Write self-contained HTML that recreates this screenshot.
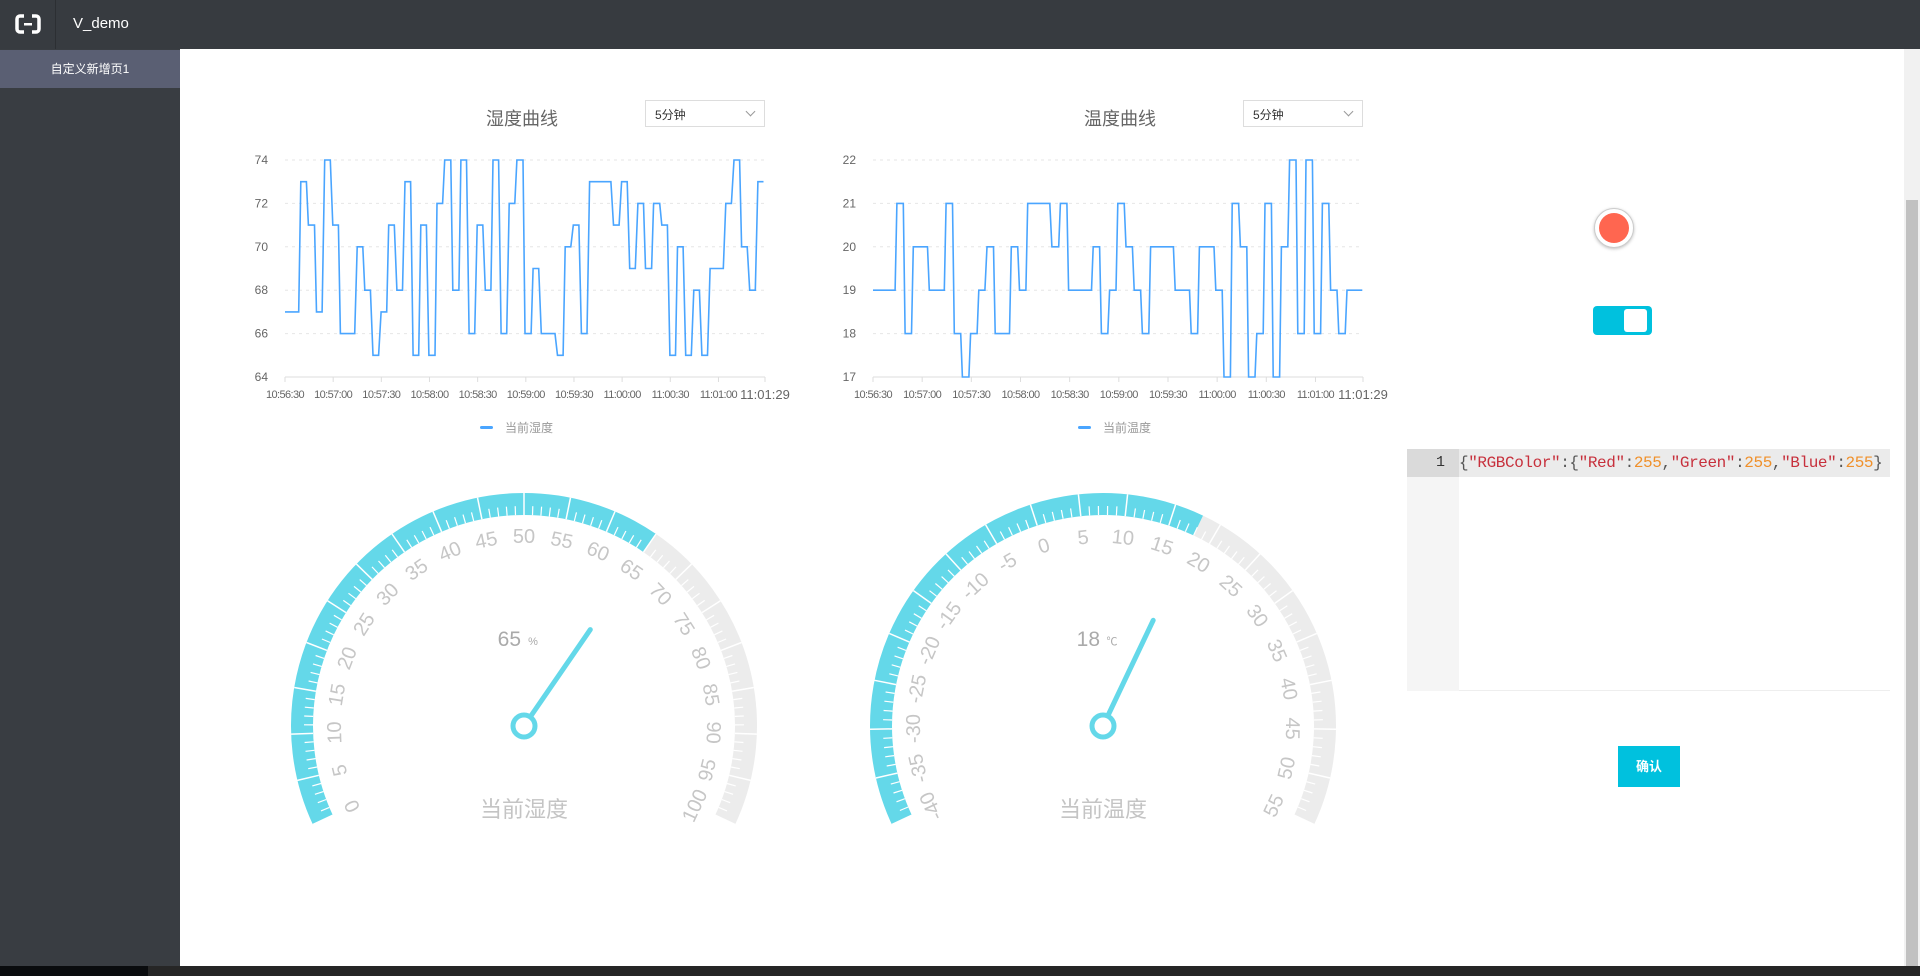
<!DOCTYPE html>
<html><head><meta charset="utf-8">
<style>
*{margin:0;padding:0;box-sizing:border-box}
body{width:1920px;height:976px;overflow:hidden;background:#fff;font-family:"Liberation Sans","Noto Sans CJK SC",sans-serif;position:relative}
.hdr{position:absolute;left:0;top:0;width:1920px;height:49px;background:#373b40}
.logo{position:absolute;left:0;top:0;width:56px;height:49px;border-right:1px solid #2c2f33}
.app{position:absolute;left:73px;top:15px;color:#fff;font-size:15px}
.side{position:absolute;left:0;top:49px;width:180px;height:917px;background:#393d42}
.act{position:absolute;left:0;top:1px;width:180px;height:38px;background:#5a5f73;color:#fff;font-size:12px;text-align:center;line-height:38px}
.task{position:absolute;left:0;top:966px;width:1920px;height:10px;background:#262626}
.sb{position:absolute;left:1904px;top:49px;width:16px;height:917px;background:#f1f1f1}
.th{position:absolute;left:1906px;top:200px;width:12px;height:766px;background:#c1c1c1}
.title{position:absolute;font-size:18px;color:#666}
.sel{position:absolute;width:120px;height:27px;border:1px solid #ddd;font-size:12px;color:#333;padding:5px 0 0 9px}
.sel:after{content:"";position:absolute;right:10px;top:7px;width:6px;height:6px;border-right:1px solid #999;border-bottom:1px solid #999;transform:rotate(45deg)}
.ed{position:absolute;left:1407px;top:449px;width:483px;height:242px;border-bottom:1px solid #eee}
.gut{position:absolute;left:0;top:0;width:52px;height:242px;background:#f5f5f5}
.ln{position:absolute;left:0;top:0;width:52px;height:28px;background:#dadada;text-align:right;padding-right:14px;font:15px "Liberation Mono",monospace;line-height:28px;color:#333}
.hl{position:absolute;left:52px;top:0;width:431px;height:28px;background:#ebebeb;font:16px "Liberation Mono",monospace;line-height:28px;color:#555;white-space:pre;overflow:hidden;letter-spacing:-0.4px}
.s{color:#c7303c}.n{color:#f0902a}
.btn{position:absolute;left:1618px;top:746px;width:62px;height:41px;background:#00c1de;color:#fff;font-size:13px;font-weight:bold;text-align:center;line-height:41px}
.tog{position:absolute;left:1593px;top:306px;width:59px;height:29px;background:#00c1de;border-radius:4px}
.tog i{position:absolute;right:5px;top:3px;width:23px;height:23px;background:#fff;border-radius:3px}
.dot{position:absolute;left:1594px;top:208px;width:40px;height:40px;border-radius:50%;background:#fff;border:1px solid #ccc;box-shadow:0 1px 3px rgba(0,0,0,.25)}
.dot i{position:absolute;left:4px;top:4px;width:30px;height:30px;border-radius:50%;background:#ff6650}
svg text{font-family:"Liberation Sans","Noto Sans CJK SC",sans-serif}
</style></head><body>
<div class="hdr"><div class="logo"><svg width="56" height="49"><path d="M24 16h-4a3 3 0 0 0-3 3v10a3 3 0 0 0 3 3h4M32 16h4a3 3 0 0 1 3 3v10a3 3 0 0 1-3 3h-4" stroke="#fff" stroke-width="3.5" fill="none"/><rect x="24" y="23" width="8" height="2.5" fill="#fff"/></svg></div><div class="app">V_demo</div></div>
<div class="side"><div class="act">自定义新增页1</div></div>
<div class="sb"></div><div class="th"></div>
<div class="task"><div style="position:absolute;left:0;top:0;width:148px;height:10px;background:#0a0c0e"></div></div>

<div class="title" style="left:486px;top:105px">湿度曲线</div>
<div class="sel" style="left:645px;top:100px">5分钟</div>
<div class="title" style="left:1084px;top:105px">温度曲线</div>
<div class="sel" style="left:1243px;top:100px">5分钟</div>

<svg id="main" width="1920" height="976" style="position:absolute;left:0;top:0"></svg>

<div class="dot"><i></i></div>
<div class="tog"><i></i></div>
<div class="ed"><div class="gut"></div><div class="ln">1</div><div class="hl">{<span class="s">"RGBColor"</span>:{<span class="s">"Red"</span>:<span class="n">255</span>,<span class="s">"Green"</span>:<span class="n">255</span>,<span class="s">"Blue"</span>:<span class="n">255</span>}</div></div>
<div class="btn">确认</div>

<script>
var svg=document.getElementById('main'),out='';
function chart(x0,x1,yTop,yBot,vmin,vmax,vstep,z0,z1,data,legend,lx){
  var step=(yBot-yTop)/(vmax-vmin);
  for(var v=vmin;v<=vmax;v+=vstep){var y=yBot-(v-vmin)*step;
    if(v>vmin)out+='<line x1="'+x0+'" x2="'+x1+'" y1="'+y+'" y2="'+y+'" stroke="#e6e6e6" stroke-dasharray="3,4"/>';
    out+='<text x="'+(x0-17)+'" y="'+(y+4)+'" font-size="12" fill="#666" text-anchor="end">'+v+'</text>';}
  out+='<line x1="'+x0+'" x2="'+x1+'" y1="'+yBot+'" y2="'+yBot+'" stroke="#ddd"/>';
  var labs=['10:56:30','10:57:00','10:57:30','10:58:00','10:58:30','10:59:00','10:59:30','11:00:00','11:00:30','11:01:00'];
  for(var i=0;i<labs.length;i++){var x=x0+(x1-x0)*i*30/299;
    out+='<line x1="'+x+'" x2="'+x+'" y1="'+yBot+'" y2="'+(yBot+5)+'" stroke="#ddd"/>';
    out+='<text x="'+x+'" y="'+(yBot+21)+'" font-size="11" fill="#666" text-anchor="middle" letter-spacing="-0.6">'+labs[i]+'</text>';}
  out+='<line x1="'+x1+'" x2="'+x1+'" y1="'+yBot+'" y2="'+(yBot+5)+'" stroke="#ddd"/>';
  out+='<text x="'+x1+'" y="'+(yBot+22)+'" font-size="13" fill="#666" text-anchor="middle">11:01:29</text>';
  var p='';
  for(var i=0;i<data.length;i+=2){var x=x0+(data[i]-z0)/(z1-z0)*(x1-x0),y=yBot-(data[i+1]-vmin)*step;p+=(i?'L':'M')+x.toFixed(1)+' '+y.toFixed(1);}
  out+='<path d="'+p+'" fill="none" stroke="#4aa5ff" stroke-width="1.6"/>';
  out+='<rect x="'+lx+'" y="'+(yBot+49)+'" width="13" height="3" rx="1.5" fill="#4aa5ff"/>';
  out+='<text x="'+(lx+25)+'" y="'+(yBot+55)+'" font-size="12" fill="#999">'+legend+'</text>';
}
var hum=[556,67,583,67,587,73,598,73,602,71,614,71,618,67,629,67,634,74,645,74,650,71,661,71,665,66,693,66,698,70,709,70,713,68,724,68,729,65,740,65,745,67,756,67,760,71,771,71,776,68,787,68,792,73,803,73,808,65,819,65,823,71,834,71,839,65,851,65,855,72,866,72,870,74,882,74,886,68,898,68,902,74,913,74,918,66,929,66,934,71,945,71,950,68,961,68,965,74,976,74,981,66,992,66,997,72,1008,72,1012,74,1024,74,1028,66,1040,66,1044,69,1055,69,1060,66,1087,66,1092,65,1103,65,1107,70,1118,70,1123,71,1134,71,1139,66,1150,66,1155,73,1197,73,1202,71,1213,71,1218,73,1229,73,1234,69,1245,69,1250,72,1261,72,1265,69,1277,69,1281,72,1293,72,1297,71,1308,71,1313,65,1324,65,1328,70,1339,70,1344,65,1355,65,1360,68,1371,68,1376,65,1387,65,1392,69,1418,69,1423,72,1434,72,1439,74,1450,74,1454,70,1465,70,1470,68,1481,68,1486,73,1497,73];
var tmp=[90,19,152,19,157,21,175,21,180,18,198,18,203,20,243,20,248,19,290,19,295,21,313,21,318,18,336,18,341,17,359,17,364,18,382,18,387,19,404,19,410,20,428,20,433,18,473,18,478,20,496,20,501,19,519,19,524,21,586,21,592,20,611,20,616,21,634,21,639,19,703,19,708,20,726,20,731,18,749,18,754,19,772,19,777,21,795,21,800,20,818,20,823,19,841,19,846,18,864,18,869,20,933,20,938,19,978,19,983,18,1001,18,1006,20,1047,20,1052,19,1070,19,1075,17,1093,17,1098,21,1116,21,1121,20,1139,20,1144,17,1162,17,1167,18,1185,18,1190,21,1208,21,1213,17,1231,17,1236,20,1254,20,1259,22,1277,22,1282,18,1300,18,1305,22,1323,22,1328,18,1346,18,1351,21,1369,21,1374,19,1392,19,1397,18,1415,18,1420,19,1463,19];
chart(285,765,160,377,64,74,2,556,1500,hum,'当前湿度',480);
chart(873,1363,160,377,17,22,1,90,1465,tmp,'当前温度',1078);

function pt(cx,cy,r,a){var t=a*Math.PI/180;return [cx+r*Math.cos(t),cy-r*Math.sin(t)];}
function arc(cx,cy,r,a0,a1,col,w){var p0=pt(cx,cy,r,a0),p1=pt(cx,cy,r,a1),large=(a0-a1)>180?1:0;
  return '<path d="M'+p0[0].toFixed(1)+' '+p0[1].toFixed(1)+'A'+r+' '+r+' 0 '+large+' 1 '+p1[0].toFixed(1)+' '+p1[1].toFixed(1)+'" fill="none" stroke="'+col+'" stroke-width="'+w+'"/>';}
function gauge(cx,cy,mn,mx,splits,val,unit,title){
  var R=233,B=22,rm=R-B/2,S=205,E=-25;
  var span=mx-mn;
  var va=S-(val-mn)/span*(S-E);
  out+=arc(cx,cy,rm,va,E,'#ececec',B);
  out+=arc(cx,cy,rm,S,va,'#64d8e9',B);
  var n=splits*5;
  for(var i=0;i<=n;i++){var a=S-i*(S-E)/n,maj=i%5==0;
    var p0=pt(cx,cy,R-B,a),p1=pt(cx,cy,maj?R:R-B+9,a);
    out+='<line x1="'+p0[0].toFixed(1)+'" y1="'+p0[1].toFixed(1)+'" x2="'+p1[0].toFixed(1)+'" y2="'+p1[1].toFixed(1)+'" stroke="#fff" stroke-width="'+(maj?1.5:1.2)+'"/>';}
  for(var i=0;i<=splits;i++){var a=S-i*(S-E)/splits,v=Math.round(mn+i*span/splits),p=pt(cx,cy,189,a),rot=90-a;if(rot>100)rot-=180;
    out+='<text x="'+p[0].toFixed(1)+'" y="'+p[1].toFixed(1)+'" font-size="20" fill="#c6c6c6" text-anchor="middle" dominant-baseline="central" transform="rotate('+rot.toFixed(1)+' '+p[0].toFixed(1)+' '+p[1].toFixed(1)+')">'+v+'</text>';}
  var tip=pt(cx,cy,117,va);
  out+='<line x1="'+cx+'" y1="'+cy+'" x2="'+tip[0].toFixed(1)+'" y2="'+tip[1].toFixed(1)+'" stroke="#64d8e9" stroke-width="5" stroke-linecap="round"/>';
  out+='<circle cx="'+cx+'" cy="'+cy+'" r="11" fill="#fff" stroke="#64d8e9" stroke-width="5"/>';
  out+='<text x="'+(cx-3)+'" y="'+(cy-80)+'" font-size="21" fill="#aaa" text-anchor="end">'+val+'</text>';
  out+='<text x="'+(cx+9)+'" y="'+(cy-81)+'" font-size="11" fill="#aaa" text-anchor="middle">'+unit+'</text>';
  out+='<text x="'+cx+'" y="'+(cy+91)+'" font-size="22" fill="#c4c4c4" text-anchor="middle">'+title+'</text>';
}
gauge(524,726,0,100,20,65,'%','当前湿度');
gauge(1103,726,-40,55,19,18,'℃','当前温度');
svg.innerHTML=out;
</script>
</body></html>
